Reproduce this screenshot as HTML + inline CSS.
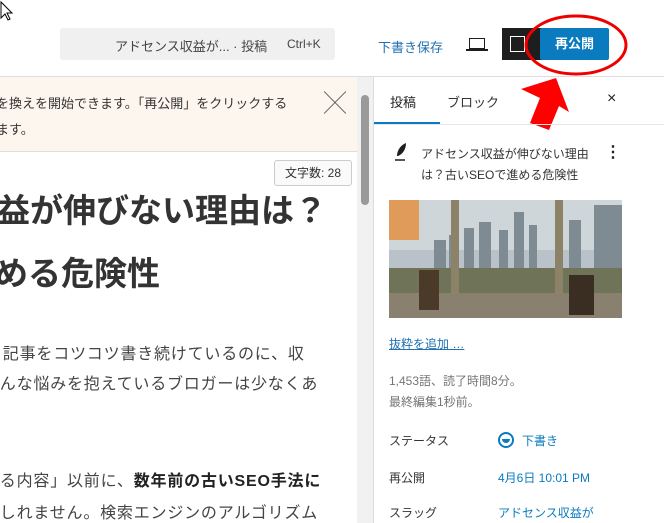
<!DOCTYPE html>
<html><head><meta charset="utf-8"><style>
*{margin:0;padding:0;box-sizing:border-box}
body{width:664px;height:523px;overflow:hidden;background:#fff;font-family:"Liberation Sans","Noto Sans CJK JP",sans-serif;color:#1e1e1e;position:relative}
.a{position:absolute;white-space:nowrap}
.clip{position:absolute;left:0;top:77px;width:357px;height:446px;overflow:hidden}
.p{font-size:16px;letter-spacing:.8px;color:#444}
</style></head><body>
<div class="a" style="left:60px;top:28px;width:275px;height:32px;background:#f0f0f0;border-radius:3px"></div>
<div class="a" style="left:115px;top:36px;font-size:13px;color:#444">アドセンス収益が... · 投稿</div>
<div class="a" style="left:287px;top:37px;font-size:12px;color:#444">Ctrl+K</div>
<div class="a" style="left:378px;top:37px;font-size:13px;color:#2271b1">下書き保存</div>
<div class="a" style="left:469px;top:38px;width:16px;height:11px;border:1.5px solid #1e1e1e"></div>
<div class="a" style="left:466px;top:49px;width:22px;height:2px;background:#1e1e1e"></div>
<div class="a" style="left:502px;top:28px;width:40px;height:32px;background:#1e1e1e"></div>
<div class="a" style="left:510px;top:36px;width:15px;height:16px;border:1.5px solid #fff"></div>
<div class="a" style="left:540px;top:28px;width:69px;height:32px;background:#0a7bbf;border-radius:2px;color:#fff;font-weight:bold;font-size:13px;text-align:center;line-height:32px">再公開</div>
<svg class="a" style="left:0;top:0" width="664" height="523">
<ellipse cx="576" cy="45" rx="50" ry="29" fill="none" stroke="#e00" stroke-width="3"/>
<polygon points="556,78 569,112 559,106 549,130 530,123 540,98 521,89" fill="#f00"/>
<path d="M1 2 L1 18 L5 14 L8 20 L10 19 L7 13 L12 13 Z" fill="#fff" stroke="#000" stroke-width="1"/>
</svg>
<div class="a" style="left:0;top:76px;width:664px;height:1px;background:#ddd"></div>
<div class="clip">
<div class="a" style="left:0;top:0;width:357px;height:75px;background:#fdf6ee;border-bottom:1px solid #ddd"></div>
<div class="a" style="left:-4px;top:16px;font-size:13px;color:#333">を換えを開始できます。「再公開」をクリックする</div>
<div class="a" style="left:-4px;top:42px;font-size:13px;color:#333">ます。</div>
<div class="a" style="left:324px;top:9px;font-size:22px;color:#555;font-weight:300">╳</div>
<div class="a" style="left:274px;top:83px;width:78px;height:26px;border:1px solid #ccc;border-radius:3px;background:#fafafa;font-size:12px;text-align:center;line-height:24px;color:#333">文字数: 28</div>
<div class="a" style="left:-36px;top:107px;font-size:33px;font-weight:bold;color:#333">収益が伸びない理由は？</div>
<div class="a" style="left:-38px;top:170px;font-size:33px;font-weight:bold;color:#333">進める危険性</div>
<div class="a p" style="left:-14px;top:263px">、記事をコツコツ書き続けているのに、収</div>
<div class="a p" style="left:-17px;top:293px">そんな悩みを抱えているブロガーは少なくあ</div>
<div class="a p" style="left:-17px;top:390px">する内容」以前に、<b style="color:#222">数年前の古いSEO手法に</b></div>
<div class="a p" style="left:-17px;top:422px">もしれません。検索エンジンのアルゴリズム</div>
</div>
<div class="a" style="left:357px;top:77px;width:16px;height:446px;background:#f1f1f1"></div>
<div class="a" style="left:361px;top:95px;width:8px;height:110px;background:#9a9a9a;border-radius:4px"></div>
<div class="a" style="left:373px;top:77px;width:1px;height:446px;background:#ddd"></div>
<div class="a" style="left:390px;top:92px;font-size:13px">投稿</div>
<div class="a" style="left:447px;top:92px;font-size:13px;color:#333">ブロック</div>
<div class="a" style="left:607px;top:90px;font-size:16px">×</div>
<div class="a" style="left:374px;top:122px;width:66px;height:2px;background:#0a7bbf"></div>
<div class="a" style="left:374px;top:124px;width:290px;height:1px;background:#e6e6e6"></div>
<svg class="a" style="left:393px;top:142px" width="16" height="20"><path d="M4 14 C4 8 8 3 13 1 C13 7 10 12 5 14 Z" fill="#1e1e1e"/><path d="M2 18 H12" stroke="#1e1e1e" stroke-width="1.5"/></svg>
<div class="a" style="left:421px;top:144px;font-size:12px;line-height:21px;color:#333">アドセンス収益が伸びない理由<br>は？古いSEOで進める危険性</div>
<div class="a" style="left:605px;top:142px;font-size:16px;font-weight:bold">⋮</div>
<svg class="a" style="left:389px;top:200px" width="233" height="118">
<rect width="233" height="118" fill="#b8c2c8"/>
<rect y="0" width="233" height="50" fill="#cfd6da"/>
<g fill="#7f8b93">
<rect x="45" y="40" width="12" height="35"/><rect x="60" y="35" width="8" height="40"/><rect x="75" y="28" width="10" height="47"/><rect x="90" y="22" width="12" height="53"/><rect x="110" y="30" width="9" height="45"/><rect x="125" y="12" width="10" height="63"/><rect x="140" y="25" width="8" height="50"/><rect x="180" y="20" width="12" height="55"/><rect x="205" y="5" width="28" height="70"/>
</g>
<rect y="68" width="233" height="25" fill="#6f7358"/>
<rect y="93" width="233" height="25" fill="#8a8070"/>
<rect x="0" y="0" width="30" height="40" fill="#e09a5a"/>
<rect x="62" y="0" width="8" height="95" fill="#8b8268"/>
<rect x="166" y="0" width="8" height="95" fill="#8b8268"/>
<rect x="30" y="70" width="20" height="40" fill="#4b3a28"/>
<rect x="180" y="75" width="25" height="40" fill="#3a2e22"/>
</svg>
<div class="a" style="left:389px;top:335px;font-size:12px;color:#2271b1;text-decoration:underline">抜粋を追加 …</div>
<div class="a" style="left:389px;top:372px;font-size:12px;color:#757575">1,453語、読了時間8分。</div>
<div class="a" style="left:389px;top:393px;font-size:12px;color:#757575">最終編集1秒前。</div>
<div class="a" style="left:389px;top:432px;font-size:12px;color:#333">ステータス</div>
<div class="a" style="left:498px;top:432px;width:16px;height:16px;border:2px solid #0a7bbf;border-radius:50%"></div>
<div class="a" style="left:502px;top:439px;width:8px;height:4px;background:#0a7bbf;border-radius:0 0 4px 4px"></div>
<div class="a" style="left:522px;top:432px;font-size:12px;color:#0a7bbf">下書き</div>
<div class="a" style="left:389px;top:469px;font-size:12px;color:#333">再公開</div>
<div class="a" style="left:498px;top:469px;font-size:12px;color:#0a7bbf">4月6日 10:01 PM</div>
<div class="a" style="left:389px;top:504px;font-size:12px;color:#333">スラッグ</div>
<div class="a" style="left:498px;top:504px;font-size:12px;color:#0a7bbf">アドセンス収益が</div>
</body></html>
